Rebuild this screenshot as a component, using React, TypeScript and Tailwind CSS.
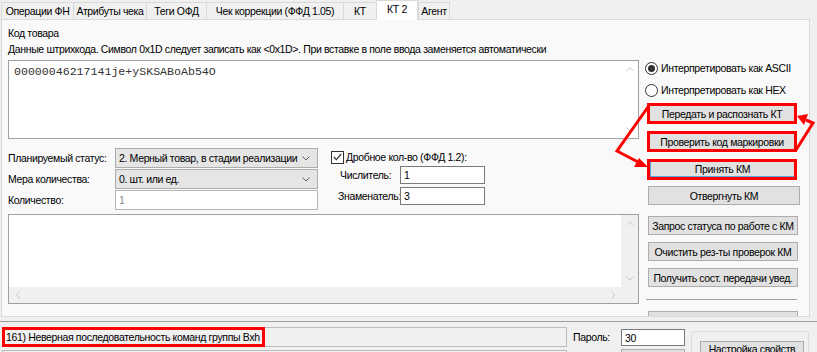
import React from 'react';

const tabs = [
  { label: 'Операции ФН', w: 'w-[72px]' },
  { label: 'Атрибуты чека', w: 'w-[73px]' },
  { label: 'Теги ОФД', w: 'w-[60px]' },
  { label: 'Чек коррекции (ФФД 1.05)', w: 'w-[137px]' },
  { label: 'КТ', w: 'w-[33px]' },
  { label: 'КТ 2', w: 'w-[42px]', active: true },
  { label: 'Агент', w: 'w-[32px]' },
];

const Chevron = ({ dir = 'down', color = '#606060' }: { dir?: 'down' | 'up' | 'left' | 'right'; color?: string }) => {
  const d = {
    down: 'M0.5 0.5 L4 4 L7.5 0.5',
    up: 'M0.5 4 L4 0.5 L7.5 4',
    left: 'M4 0.5 L0.5 4 L4 7.5',
    right: 'M0.5 0.5 L4 4 L0.5 7.5',
  }[dir];
  const horiz = dir === 'down' || dir === 'up';
  return (
    <svg width={horiz ? 8 : 5} height={horiz ? 5 : 8} viewBox={horiz ? '0 0 8 5' : '0 0 5 8'}>
      <path d={d} fill="none" stroke={color} strokeWidth="1" />
    </svg>
  );
};

const Button = ({ children, className = '' }: { children: React.ReactNode; className?: string }) => (
  <div className={`flex items-center justify-center whitespace-nowrap bg-[#e1e1e1] border border-[#adadad] ${className}`}>{children}</div>
);

const RedButton = ({ children, focused }: { children: React.ReactNode; focused?: boolean }) => (
  <div className="ml-[2px] w-[150px] h-[21px] border-[3px] border-[#ff0000] bg-[#e1e1e1]">
    <div className={`h-full flex items-center justify-center whitespace-nowrap ${focused ? 'border border-[#5aa7e6] border-t-0 border-r-0' : ''}`}>
      {children}
    </div>
  </div>
);

const Select = ({ value }: { value: string }) => (
  <div className="w-[203px] h-[20px] bg-[#e5e5e5] border border-[#acacac] flex items-center justify-between pl-[3px] pr-[7px]">
    <span className="whitespace-nowrap">{value}</span>
    <Chevron />
  </div>
);

export default function App() {
  return (
    <div className="relative w-[817px] h-[352px] overflow-hidden bg-[#f0f0f0] text-[10.5px] tracking-[-0.35px] leading-[14px] text-black [font-family:'Liberation_Sans',Arial,sans-serif]">
      {/* Tabs */}
      <div className="flex items-end h-[19px] pl-[1px] relative z-10">
        {tabs.map((t) =>
          t.active ? (
            <div key={t.label} className={`${t.w} h-[20px] -mb-[1px] bg-white border border-b-0 border-[#d9d9d9] flex items-start justify-center pt-[1px]`}>
              {t.label}
            </div>
          ) : (
            <div key={t.label} className={`${t.w} h-[17px] bg-[#f0f0f0] border border-b-0 border-r-0 last:border-r border-[#d9d9d9] flex items-center justify-center whitespace-nowrap`}>
              {t.label}
            </div>
          )
        )}
      </div>

      {/* Tab page */}
      <div className="ml-[1px] w-[809px] h-[298px] border border-[#d9d9d9] bg-[#f9f9f9] flex pl-[6px] overflow-hidden">
        {/* Left column */}
        <div className="w-[631px] flex flex-col *:shrink-0">
          <div className="mt-[6px] h-[14px]">Код товара</div>
          <div className="mt-[2px] h-[14px] whitespace-nowrap">
            Данные штрихкода. Символ 0x1D следует записать как &lt;0x1D&gt;. При вставке в поле ввода заменяется автоматически
          </div>
          <div className="mt-[4px] h-[79px] border border-[#a0a0a0] bg-white flex">
            <div className="flex-1 pl-[5px] pt-[4px] text-[11.6px] tracking-normal text-[#333] [font-family:'Liberation_Mono','Courier_New',monospace]">
              00000046217141je+ySKSABoAb54O
            </div>
            <div className="w-[17px] flex flex-col items-center justify-between py-[6px]">
              <Chevron dir="up" color="#c8c8c8" />
              <Chevron dir="down" color="#c8c8c8" />
            </div>
          </div>

          {/* Form block */}
          <div className="mt-[9px] flex">
            <div className="w-[310px] flex flex-col gap-[1px]">
              <div className="flex items-center h-[20px]">
                <span className="w-[107px] whitespace-nowrap">Планируемый статус:</span>
                <Select value="2. Мерный товар, в стадии реализации" />
              </div>
              <div className="flex items-center h-[20px]">
                <span className="w-[107px] whitespace-nowrap">Мера количества:</span>
                <Select value="0. шт. или ед." />
              </div>
              <div className="flex items-center h-[20px]">
                <span className="w-[107px]">Количество:</span>
                <div className="w-[203px] h-[20px] bg-white border border-[#b5b5b5] flex items-center pl-[3px] text-[#8a8a8a]">1</div>
              </div>
            </div>
            <div className="ml-[13px] flex flex-col">
              <div className="flex items-center h-[16px] mt-[1px]">
                <div className="w-[13px] h-[13px] border border-[#333] bg-white flex items-center justify-center">
                  <svg width="9" height="8" viewBox="0 0 9 8">
                    <path d="M0.8 4 L3.3 6.6 L8.2 1" fill="none" stroke="#333" strokeWidth="1.2" />
                  </svg>
                </div>
                <span className="ml-[2px] whitespace-nowrap">Дробное кол-во (ФФД 1.2):</span>
              </div>
              <div className="flex items-center h-[18px] mt-[1px]">
                <span className="w-[69px] pl-[9px] whitespace-nowrap">Числитель:</span>
                <div className="w-[85px] h-[18px] bg-white border border-[#7a7a7a] flex items-center pl-[3px]">1</div>
              </div>
              <div className="flex items-center h-[18px] mt-[3px]">
                <span className="w-[69px] pl-[7px] whitespace-nowrap">Знаменатель:</span>
                <div className="w-[85px] h-[18px] bg-white border border-[#7a7a7a] flex items-center pl-[3px]">3</div>
              </div>
            </div>
          </div>

          {/* Bottom text box */}
          <div className="mt-[4px] h-[90px] border border-[#a0a0a0] bg-[#f0f0f0] flex flex-col">
            <div className="flex flex-1">
              <div className="flex-1 bg-white" />
              <div className="w-[17px] flex flex-col items-center justify-between py-[6px]">
                <Chevron dir="up" color="#c8c8c8" />
                <Chevron dir="down" color="#c8c8c8" />
              </div>
            </div>
            <div className="h-[16px] flex items-center justify-between pl-[7px] pr-[22px]">
              <Chevron dir="left" color="#c8c8c8" />
              <Chevron dir="right" color="#c8c8c8" />
            </div>
          </div>
        </div>

        {/* Right column */}
        <div className="ml-[6px] w-[158px] flex flex-col *:shrink-0">
          <div className="mt-[40px] h-[16px] flex items-center">
            <div className="w-[13px] h-[13px] rounded-full border border-[#333] bg-white flex items-center justify-center">
              <div className="w-[7px] h-[7px] rounded-full bg-[#333]" />
            </div>
            <span className="ml-[3px] whitespace-nowrap">Интерпретировать как ASCII</span>
          </div>
          <div className="mt-[6px] h-[16px] flex items-center">
            <div className="w-[13px] h-[13px] rounded-full border border-[#333] bg-white" />
            <span className="ml-[3px] whitespace-nowrap">Интерпретировать как HEX</span>
          </div>
          <div className="mt-[5px]">
            <RedButton>Передать и распознать КТ</RedButton>
          </div>
          <div className="mt-[7px]">
            <RedButton>Проверить код маркировки</RedButton>
          </div>
          <div className="mt-[7px]">
            <RedButton focused>Принять КМ</RedButton>
          </div>
          <Button className="mt-[6px] ml-[3px] w-[152px] h-[19px]">Отвергнуть КМ</Button>
          <Button className="mt-[11px] ml-[3px] w-[150px] h-[19px]">Запрос статуса по работе с КМ</Button>
          <Button className="mt-[7px] ml-[3px] w-[150px] h-[19px]">Очистить рез-ты проверок КМ</Button>
          <Button className="mt-[7px] ml-[3px] w-[150px] h-[19px]">Получить сост. передачи увед.</Button>
          <div className="mt-[12px] ml-[1px] w-[151px] h-px bg-[#a0a0a0]" />
          <Button className="mt-[11px] ml-[3px] w-[150px] h-[19px]">&nbsp;</Button>
        </div>
      </div>

      {/* Status area */}
      <div className="mt-[4px] h-px bg-[#a0a0a0]" />
      <div className="flex mt-[5px] pl-[2px]">
        <div className="flex flex-col gap-[3px]">
          <div className="w-[565px] h-[20px] border border-[#bcbcbc] flex">
            <div className="w-[263px] -m-[1px] h-[20px] border-[3px] border-[#ff0000] flex items-center pl-[1px] whitespace-nowrap">
              161) Неверная последовательность команд группы Bxh
            </div>
          </div>
          <div className="w-[565px] h-[20px] border border-[#bcbcbc]" />
        </div>
        <div className="ml-[6px] flex flex-col">
          <div className="flex items-start">
            <span className="w-[48px] mt-[3px]">Пароль:</span>
            <div className="mt-[2px] w-[64px] h-[17px] bg-white border border-[#7a7a7a] flex items-center pl-[3px]">30</div>
          </div>
          <div className="ml-[48px] mt-[3px] w-[64px] h-[17px] bg-[#e1e1e1] border border-[#adadad]" />
        </div>
        <div className="ml-[6px] mt-[4px] w-[118px] h-[40px] border border-[#dcdcdc] rounded-[2px] pl-[8px] pt-[9px]">
          <div className="w-[104px] h-[22px] bg-[#e1e1e1] border border-[#adadad] flex justify-center pt-0 whitespace-nowrap">
            Настройка свойств
          </div>
        </div>
      </div>

      {/* Annotation arrows */}
      <svg className="absolute inset-0 pointer-events-none" width="817" height="352">
        <polyline points="648,107 617,151 638,162" fill="none" stroke="#ff0000" strokeWidth="3" />
        <polygon points="648,167 634,167 639,158" fill="#ff0000" />
        <polyline points="796,150 813,123 806,120" fill="none" stroke="#ff0000" strokeWidth="3" />
        <polygon points="797,116 808,114 804,125" fill="#ff0000" />
      </svg>
    </div>
  );
}
